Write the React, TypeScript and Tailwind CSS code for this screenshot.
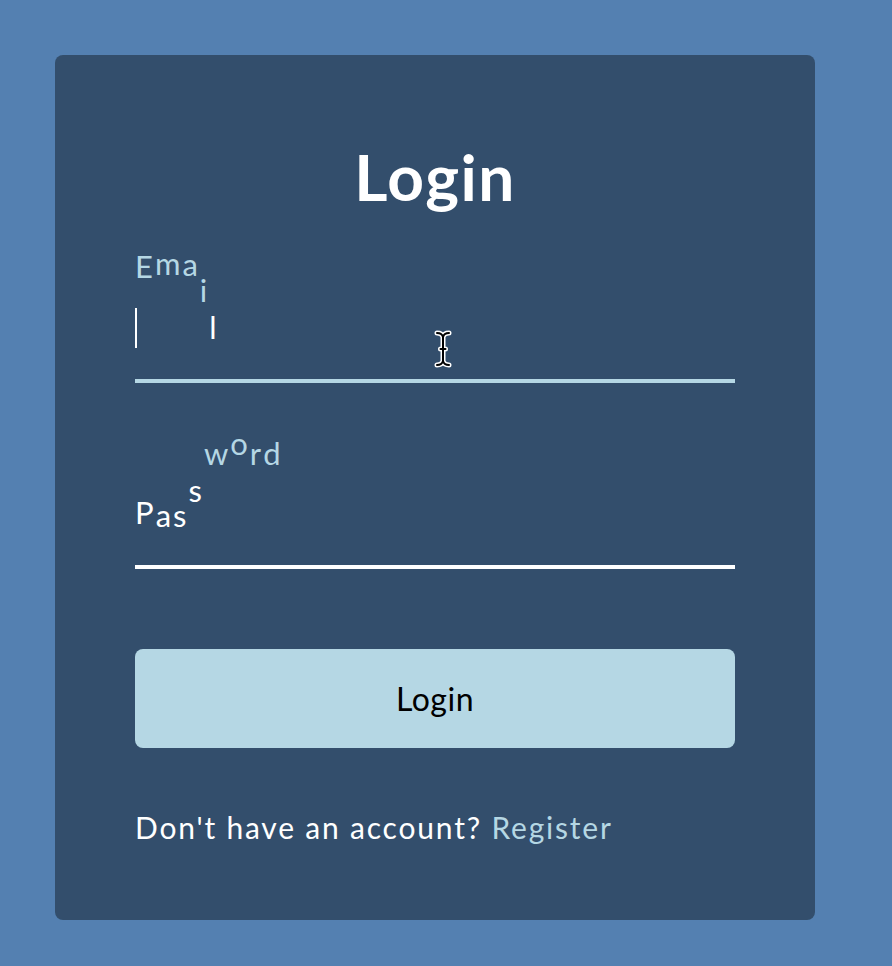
import React from "react";

type L = { ch: string; cls: string };

const emailLetters: L[] = [
  { ch: "E", cls: "translate-y-[-63px] text-[#b5d7e4]" },
  { ch: "m", cls: "translate-y-[-66px] text-[#b5d7e4]" },
  { ch: "a", cls: "translate-y-[-65px] text-[#b5d7e4]" },
  { ch: "i", cls: "translate-y-[-39px] text-[#b5d7e4]" },
  { ch: "l", cls: "translate-y-[-2px] text-white" },
];

const passLetters: L[] = [
  { ch: "P", cls: "translate-y-[-3px] text-white" },
  { ch: "a", cls: "translate-y-[0px] text-white" },
  { ch: "s", cls: "translate-y-[0px] text-white" },
  { ch: "s", cls: "translate-y-[-25px] text-white" },
  { ch: "w", cls: "translate-y-[-62px] text-[#b5d7e4]" },
  { ch: "o", cls: "translate-y-[-72px] text-[#b5d7e4]" },
  { ch: "r", cls: "translate-y-[-62px] text-[#b5d7e4]" },
  { ch: "d", cls: "translate-y-[-62px] text-[#b5d7e4]" },
];

function Label({ letters }: { letters: L[] }) {
  return (
    <label className="absolute left-0 top-[66px] flex text-[31px] leading-[40px] tracking-[2px] pointer-events-none">
      {letters.map((l, i) => (
        <span key={i} className={`inline-block ${l.cls}`}>
          {l.ch}
        </span>
      ))}
    </label>
  );
}

export default function App() {
  return (
    <div
      className="min-h-[966px] w-full bg-[#5480b1] pt-[55px] pl-[55px] pb-[46px]"
      style={{ fontFamily: "Lato, 'Open Sans', sans-serif" }}
    >
      <div className="w-[760px] h-[865px] rounded-lg bg-[#334e6c] px-[80px] pt-[82px]">
        <h1 className="text-center text-white font-bold text-[64px] leading-[80px] tracking-[1.5px]">
          Login
        </h1>
        <form onSubmit={(e) => e.preventDefault()}>
          <div className="relative mt-[26px] pt-[60px]">
            <input
              type="text"
              className="block w-full h-[80px] bg-transparent border-0 border-b-4 border-[#b5d7e4] outline-none text-white text-[31px]"
            />
            <Label letters={emailLetters} />
            <span className="absolute left-0 top-[65px] w-[2px] h-[40px] bg-white" />
            <svg
              className="absolute left-[299px] top-[87px]"
              width="18"
              height="38"
              viewBox="0 0 18 38"
              fill="none"
            >
              <g strokeLinecap="round" strokeLinejoin="round">
                <path
                  d="M3 3 Q8 3 9 7 Q10 3 15 3 M9 7 V31 M3 35 Q8 35 9 31 Q10 35 15 35 M6.5 19 H11.5"
                  stroke="white"
                  strokeWidth="5"
                />
                <path
                  d="M3 3 Q8 3 9 7 Q10 3 15 3 M9 7 V31 M3 35 Q8 35 9 31 Q10 35 15 35 M6.5 19 H11.5"
                  stroke="black"
                  strokeWidth="2"
                />
              </g>
            </svg>
          </div>
          <div className="relative mt-[46px] pt-[60px]">
            <input
              type="password"
              className="block w-full h-[80px] bg-transparent border-0 border-b-4 border-white outline-none text-white text-[31px]"
            />
            <Label letters={passLetters} />
          </div>
          <button
            type="submit"
            className="mt-[80px] block w-full h-[99px] rounded-lg bg-[#b5d7e4] text-black text-[32px] tracking-[0.5px]"
          >
            Login
          </button>
          <p className="mt-[59px] text-white text-[30px] leading-[40px] tracking-[1.8px]">
            Don't have an account?{" "}
            <a href="#" className="text-[#b5d7e4]">
              Register
            </a>
          </p>
        </form>
      </div>
    </div>
  );
}
